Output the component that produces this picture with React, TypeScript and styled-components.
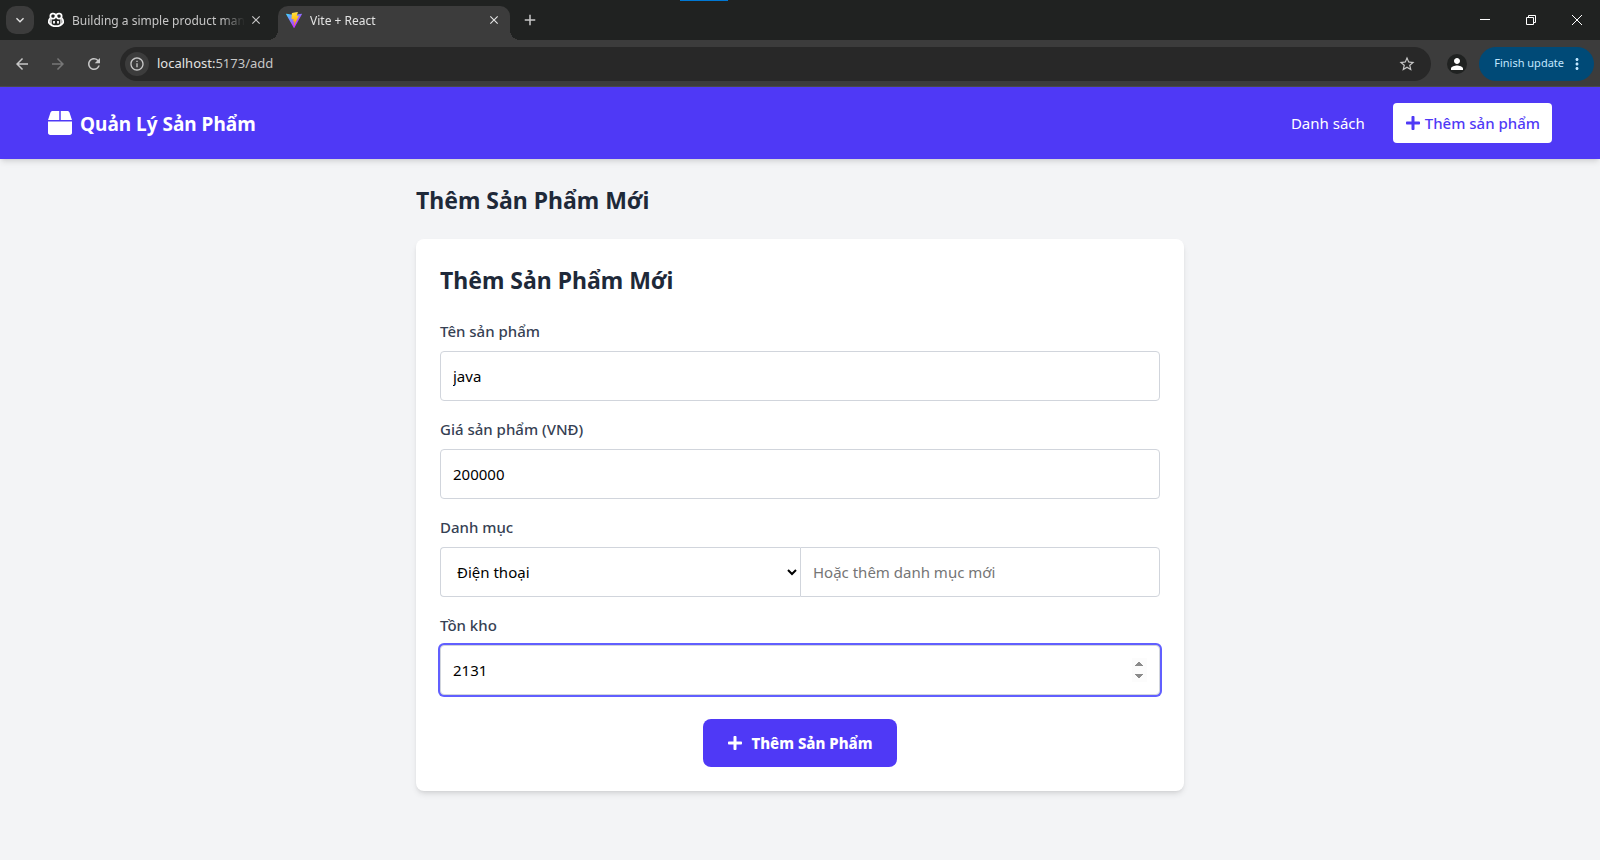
import React, { useState } from 'react';
import styled, { createGlobalStyle, css } from 'styled-components';
import { FaBox, FaPlus } from 'react-icons/fa';
import {
  MdArrowBack,
  MdArrowForward,
  MdClose,
  MdAdd,
  MdKeyboardArrowDown,
  MdMoreVert,
  MdOutlineInfo,
  MdPerson,
  MdRefresh,
  MdStarBorder,
} from 'react-icons/md';

const uiFont = '"Segoe UI", "Noto Sans", "Open Sans", sans-serif';

const GlobalStyle = createGlobalStyle`
  *, *::before, *::after { box-sizing: border-box; }
  body { margin: 0; background: #f3f4f6; font-family: ${uiFont}; font-size: 15px; line-height: 24px; }
  h1, h2 { margin: 0; }
  button, input, select { font: inherit; margin: 0; }
  a { color: inherit; text-decoration: none; }
  svg { display: block; flex-shrink: 0; }
`;

const Page = styled.div`
  min-height: 100vh;
`;

/* Browser window */

const TabStrip = styled.div`
  position: relative;
  display: flex;
  align-items: flex-end;
  height: 40px;
  padding-left: 6px;
  background: #202221;
`;

const WindowAccent = styled.span`
  position: absolute;
  top: 0;
  left: 50%;
  width: 48px;
  height: 1px;
  margin-left: -120px;
  background: #0078d4;
`;

const BareButton = styled.button`
  display: flex;
  align-items: center;
  justify-content: center;
  padding: 0;
  border: 0;
  background: none;
  color: inherit;
`;

const TabSearch = styled(BareButton)`
  width: 28px;
  height: 28px;
  margin-bottom: 6px;
  border-radius: 10px;
  background: #3c3c3c;
  color: #e3e3e3;
`;

const Tab = styled.div<{ $active?: boolean }>`
  position: relative;
  display: flex;
  align-items: center;
  width: 232px;
  height: 34px;
  padding: 0 9px 6px 8px;
  margin-left: 6px;
  font-size: 12px;
  line-height: 16px;
  color: ${(p) => (p.$active ? '#e3e3e3' : '#c7c7c7')};
  ${(p) =>
    p.$active &&
    css`
      border-radius: 10px 10px 0 0;
      background: #3c3c3c;
      &::before,
      &::after {
        content: '';
        position: absolute;
        bottom: 0;
        width: 10px;
        height: 10px;
      }
      &::before {
        right: 100%;
        background: radial-gradient(circle at 0 0, transparent 10px, #3c3c3c 10px);
      }
      &::after {
        left: 100%;
        background: radial-gradient(circle at 100% 0, transparent 10px, #3c3c3c 10px);
      }
    `}
`;

const TabTitle = styled.span`
  flex: 1;
  min-width: 0;
  margin: 2px 4px 0 8px;
  white-space: nowrap;
  mask-image: linear-gradient(to right, #000 calc(100% - 24px), transparent);
`;

const NewTab = styled(BareButton)`
  width: 28px;
  height: 28px;
  margin: 0 0 6px 6px;
  color: #c7c7c7;
`;

const WindowButtons = styled.div`
  display: flex;
  height: 40px;
  margin-left: auto;
  color: #fff;
`;

const WindowButton = styled(BareButton)`
  width: 46px;
`;

const Toolbar = styled.div`
  display: flex;
  align-items: center;
  height: 47px;
  padding: 0 6px;
  background: #3c3c3c;
  color: #c7c7c7;
  box-shadow: inset 0 -1px #4a4a4a;
`;

const NavButton = styled(BareButton)`
  width: 32px;
  height: 34px;
  margin-right: 4px;
  color: #c7c7c7;
  &:disabled { color: #777; }
`;

const AddressBar = styled.div`
  display: flex;
  flex: 1;
  align-items: center;
  height: 34px;
  margin-left: 6px;
  padding: 0 15px 0 5px;
  border-radius: 17px;
  background: #282828;
`;

const SiteInfo = styled(BareButton)`
  width: 24px;
  height: 24px;
  border-radius: 50%;
  background: #3c3c3c;
`;

const Address = styled.div`
  flex: 1;
  padding: 0 0 2px 8px;
  font-size: 13px;
  line-height: 20px;
  b { font-weight: 400; color: #e3e3e3; }
`;

const Profile = styled(BareButton)`
  width: 20px;
  height: 20px;
  margin: 0 12px 0 16px;
  border-radius: 50%;
  background: #202221;
  color: #fff;
`;

const UpdateButton = styled(BareButton)`
  gap: 4px;
  height: 34px;
  padding: 0 8px 0 15px;
  border-radius: 17px;
  background: #004a77;
  color: #c2e7ff;
  font-size: 11px;
  span { padding-bottom: 2px; }
`;

/* Application */

const Header = styled.header`
  display: flex;
  align-items: center;
  justify-content: space-between;
  padding: 16px 48px;
  background: #4f39f6;
  color: #fff;
  box-shadow: 0 4px 6px -1px rgba(0, 0, 0, 0.1), 0 2px 4px -2px rgba(0, 0, 0, 0.1);
`;

const Brand = styled.a`
  display: flex;
  align-items: center;
  gap: 8px;
  font-size: 19px;
  line-height: 28px;
  font-weight: 700;
  span { padding-top: 2px; }
`;

const Nav = styled.nav`
  display: flex;
  align-items: center;
  gap: 28px;
`;

const AddLink = styled.a`
  display: flex;
  align-items: center;
  gap: 4px;
  padding: 8px 12px;
  border-radius: 4px;
  background: #fff;
  color: #4f39f6;
  font-weight: 500;
`;

const Main = styled.main`
  max-width: 768px;
  margin: 0 auto;
  padding: 24px 0;
`;

const Heading = styled.h2`
  margin-bottom: 22px;
  color: #1e2939;
  font-size: 23px;
  line-height: 34px;
  font-weight: 700;
`;

const Card = styled.form`
  padding: 24px;
  border-radius: 8px;
  background: #fff;
  box-shadow: 0 4px 6px -1px rgba(0, 0, 0, 0.1), 0 2px 4px -2px rgba(0, 0, 0, 0.1);
`;

const Field = styled.div`
  margin-bottom: 16px;
`;

const Label = styled.label`
  display: block;
  margin-bottom: 8px;
  color: #364153;
  font-weight: 500;
`;

const control = css`
  width: 100%;
  height: 50px;
  padding: 12px;
  border: 1px solid #d1d5dc;
  border-radius: 4px;
  outline: none;
  background: #fff;
  color: #000;
`;

const Input = styled.input<{ $ring?: boolean }>`
  ${control}
  ${(p) => p.$ring && 'box-shadow: 0 0 0 2px #615fff;'}
  &:focus { box-shadow: 0 0 0 2px #615fff; }
  &::placeholder { color: #757575; }
  &::-webkit-inner-spin-button { opacity: 1; height: 24px; }
`;

const Joined = styled.div`
  display: grid;
  grid-template-columns: 1fr 1fr;
  ${Input} { border-radius: 0 4px 4px 0; }
`;

const Select = styled.select`
  ${control}
  border-right: 0;
  border-radius: 4px 0 0 4px;
`;

const Actions = styled.div`
  display: flex;
  justify-content: center;
  padding-top: 8px;
`;

const Submit = styled.button`
  display: flex;
  align-items: center;
  gap: 8px;
  padding: 12px 24px;
  border: 0;
  border-radius: 8px;
  background: #4f39f6;
  color: #fff;
  font-weight: 800;
`;

const CopilotLogo = () => (
  <svg width="16" height="16" viewBox="0 0 16 16" fill="none" stroke="#fff" strokeWidth="1.8" aria-hidden="true">
    <path d="M7.6 3.2C7.2 1.5 5.7 1.4 4.3 1.6C2.7 1.9 2.3 3 2.4 4.5C2.5 6 3.3 6.6 4.8 6.6C6.8 6.6 7.7 5.3 7.6 3.2Z" />
    <path d="M8.4 3.2C8.8 1.5 10.3 1.4 11.7 1.6C13.3 1.9 13.7 3 13.6 4.5C13.5 6 12.7 6.6 11.2 6.6C9.2 6.6 8.3 5.3 8.4 3.2Z" />
    <path d="M2.3 6.2C1.3 7.2 .9 7.9 .9 9V10.7C2.4 12.8 5.2 14.2 8 14.2S13.6 12.8 15.1 10.7V9C15.1 7.9 14.7 7.2 13.7 6.2" />
    <path d="M3 7v5.5M13 7v5.5" strokeWidth="1.3" />
    <path d="M6 9v2.5M10 9v2.5" />
  </svg>
);

const ViteLogo = () => (
  <svg width="16" height="16" viewBox="0 0 256 257" aria-hidden="true">
    <defs>
      <linearGradient id="vite-body" x1="-.828%" x2="57.636%" y1="7.652%" y2="78.411%">
        <stop offset="0%" stopColor="#41D1FF" />
        <stop offset="100%" stopColor="#BD34FE" />
      </linearGradient>
      <linearGradient id="vite-bolt" x1="43.376%" x2="50.316%" y1="2.242%" y2="89.03%">
        <stop offset="0%" stopColor="#FFEA83" />
        <stop offset="8.333%" stopColor="#FFDD35" />
        <stop offset="100%" stopColor="#FFA800" />
      </linearGradient>
    </defs>
    <path
      fill="url(#vite-body)"
      d="M255.153 37.938L134.897 252.976c-2.483 4.44-8.862 4.466-11.382.048L.875 37.958c-2.746-4.814 1.371-10.646 6.827-9.67l120.385 21.517a6.537 6.537 0 0 0 2.322-.004l117.867-21.483c5.438-.991 9.574 4.796 6.877 9.62Z"
    />
    <path
      fill="url(#vite-bolt)"
      d="M185.432.063L96.44 17.501a3.268 3.268 0 0 0-2.634 3.014l-5.474 92.456a3.268 3.268 0 0 0 3.997 3.378l24.777-5.718c2.318-.535 4.413 1.507 3.936 3.838l-7.361 36.047c-.495 2.426 1.782 4.5 4.151 3.78l15.304-4.649c2.372-.72 4.652 1.36 4.15 3.788l-11.698 56.621c-.732 3.542 3.979 5.473 5.943 2.437l1.313-2.028l72.516-144.72c1.215-2.423-.88-5.186-3.54-4.672l-25.505 4.922c-2.396.462-4.435-1.77-3.759-4.114l16.646-57.705c.677-2.35-1.37-4.583-3.769-4.113Z"
    />
  </svg>
);

const CaptionIcon = ({ d }: { d: string }) => (
  <svg width="12" height="12" viewBox="0 0 12 12" fill="none" stroke="currentColor" aria-hidden="true">
    <path d={d} />
  </svg>
);

const CloseTab = () => (
  <BareButton aria-label="Close tab">
    <MdClose size={14} stroke="currentColor" />
  </BareButton>
);

function BrowserChrome() {
  return (
    <>
      <TabStrip>
        <WindowAccent />
        <TabSearch aria-label="Search tabs"><MdKeyboardArrowDown size={16} stroke="currentColor" /></TabSearch>
        <Tab>
          <CopilotLogo />
          <TabTitle>Building a simple product mana</TabTitle>
          <CloseTab />
        </Tab>
        <Tab $active>
          <ViteLogo />
          <TabTitle>Vite + React</TabTitle>
          <CloseTab />
        </Tab>
        <NewTab aria-label="New tab"><MdAdd size={18} /></NewTab>
        <WindowButtons>
          <WindowButton aria-label="Minimize"><CaptionIcon d="M1 5.5h10" /></WindowButton>
          <WindowButton aria-label="Restore"><CaptionIcon d="M1.5 3.5h7v7h-7zM3.5 3.5v-2h7v7h-2" /></WindowButton>
          <WindowButton aria-label="Close"><CaptionIcon d="M1 1l10 10M11 1L1 11" /></WindowButton>
        </WindowButtons>
      </TabStrip>
      <Toolbar>
        <NavButton aria-label="Back"><MdArrowBack size={18} /></NavButton>
        <NavButton aria-label="Forward" disabled><MdArrowForward size={18} /></NavButton>
        <NavButton aria-label="Reload"><MdRefresh size={18} /></NavButton>
        <AddressBar>
          <SiteInfo aria-label="Site information"><MdOutlineInfo size={16} /></SiteInfo>
          <Address><b>localhost:</b>5173/add</Address>
          <BareButton aria-label="Bookmark"><MdStarBorder size={18} /></BareButton>
        </AddressBar>
        <Profile aria-label="Profile"><MdPerson size={18} /></Profile>
        <UpdateButton><span>Finish update</span><MdMoreVert size={18} /></UpdateButton>
      </Toolbar>
    </>
  );
}

export default function App() {
  const [name, setName] = useState('java');
  const [price, setPrice] = useState('200000');
  const [stock, setStock] = useState('2131');

  return (
    <Page>
      <GlobalStyle />
      <BrowserChrome />
      <Header>
        <Brand href="#list"><FaBox size={24} /><span>Quản Lý Sản Phẩm</span></Brand>
        <Nav>
          <a href="#list">Danh sách</a>
          <AddLink href="#add"><FaPlus size={16} />Thêm sản phẩm</AddLink>
        </Nav>
      </Header>
      <Main>
        <Heading as="h1">Thêm Sản Phẩm Mới</Heading>
        <Card onSubmit={(e) => e.preventDefault()}>
          <Heading>Thêm Sản Phẩm Mới</Heading>
          <Field>
            <Label htmlFor="name">Tên sản phẩm</Label>
            <Input id="name" value={name} onChange={(e) => setName(e.target.value)} />
          </Field>
          <Field>
            <Label htmlFor="price">Giá sản phẩm (VNĐ)</Label>
            <Input id="price" value={price} onChange={(e) => setPrice(e.target.value)} />
          </Field>
          <Field>
            <Label htmlFor="category">Danh mục</Label>
            <Joined>
              <Select id="category"><option>Điện thoại</option></Select>
              <Input aria-label="Danh mục mới" placeholder="Hoặc thêm danh mục mới" />
            </Joined>
          </Field>
          <Field>
            <Label htmlFor="stock">Tồn kho</Label>
            <Input id="stock" type="number" $ring value={stock} onChange={(e) => setStock(e.target.value)} />
          </Field>
          <Actions>
            <Submit type="submit"><FaPlus size={16} />Thêm Sản Phẩm</Submit>
          </Actions>
        </Card>
      </Main>
    </Page>
  );
}
